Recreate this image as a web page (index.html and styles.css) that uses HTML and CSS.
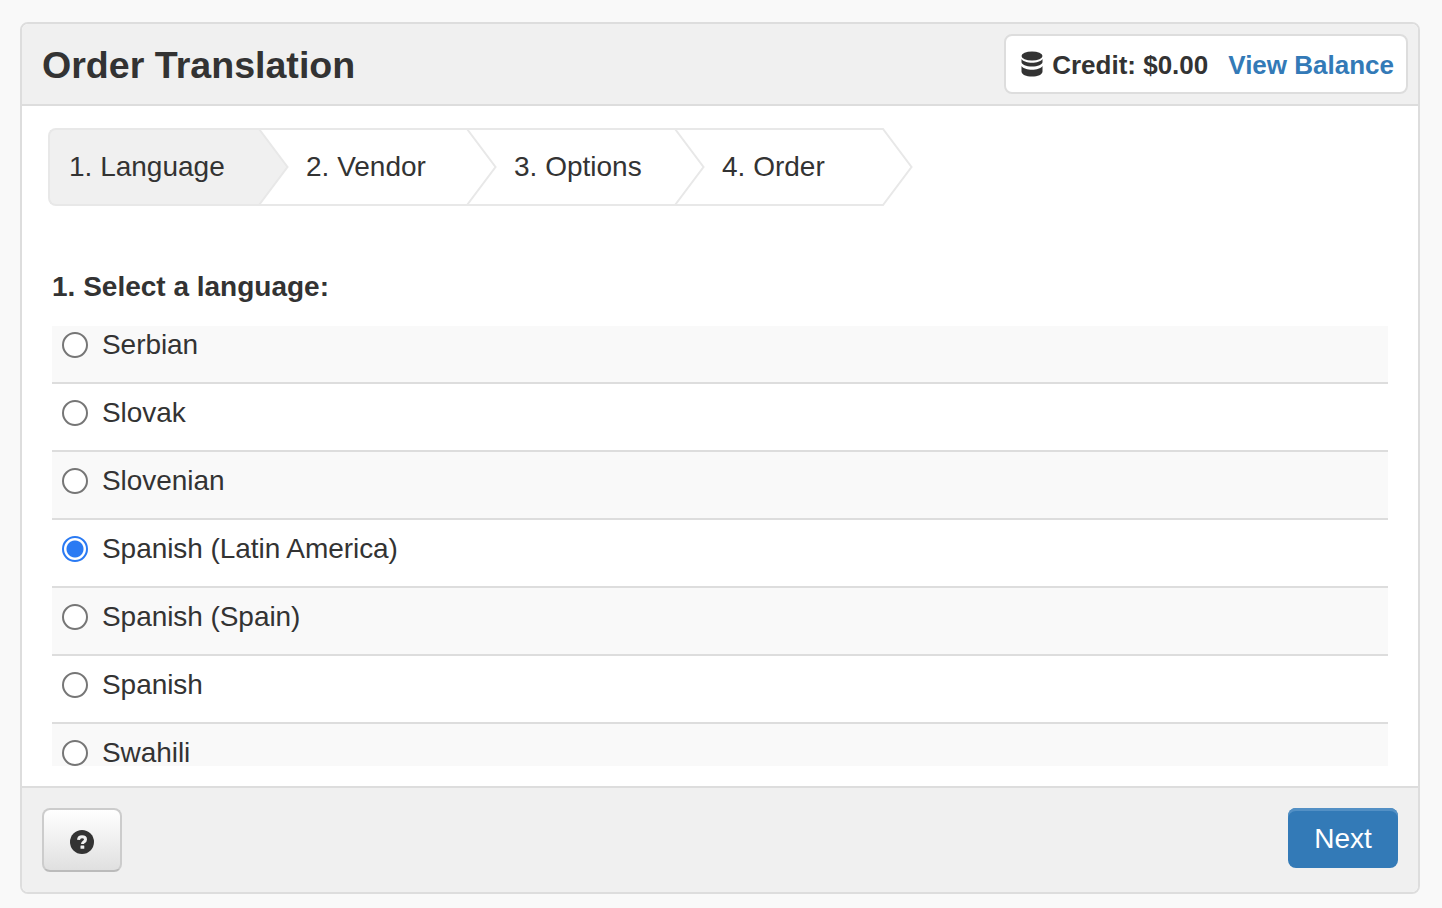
FILE: index.html
```html
<!DOCTYPE html>
<html lang="en">
<head>
<meta charset="utf-8">
<title>Order Translation</title>
<link rel="stylesheet" href="styles.css">
</head>
<body>
<main class="panel">
  <header class="panel-head">
    <h1 class="title">Order Translation</h1>
    <div class="credit">
      <svg class="db-icon" viewBox="0 0 22 26" aria-hidden="true">
        <ellipse cx="11" cy="5" rx="10.500" ry="4.500"/>
        <path d="M.5 8v3C.5 13.500 5.200 15.500 11 15.500s10.500-2 10.500-4.500V8c-1.800 2.500-6 3.700-10.500 3.700S2.300 10.500.5 8z"/>
        <path d="M.5 15v5.500C.5 23.500 5.200 25.500 11 25.500s10.500-2 10.500-5V15c-1.800 2.500-6 3.700-10.500 3.700S2.300 17.500.5 15z"/>
      </svg>
      <span class="credit-text">Credit: $0.00</span>
      <a class="balance" href="#">View Balance</a>
    </div>
  </header>

  <section class="panel-body">
    <ol class="steps">
      <li class="step step-active">1. Language
        <svg class="chev" viewBox="0 0 30 78" preserveAspectRatio="none" aria-hidden="true"><path d="M0 1H1L29.500 39L1 77H0"/></svg>
      </li>
      <li class="step">2. Vendor
        <svg class="chev" viewBox="0 0 30 78" preserveAspectRatio="none" aria-hidden="true"><path d="M0 1H1L29.500 39L1 77H0"/></svg>
      </li>
      <li class="step">3. Options
        <svg class="chev" viewBox="0 0 30 78" preserveAspectRatio="none" aria-hidden="true"><path d="M0 1H1L29.500 39L1 77H0"/></svg>
      </li>
      <li class="step">4. Order
        <svg class="chev" viewBox="0 0 30 78" preserveAspectRatio="none" aria-hidden="true"><path d="M0 1H1L29.500 39L1 77H0"/></svg>
      </li>
    </ol>

    <h2 class="prompt">1. Select a language:</h2>
    <div class="lang-window">
      <ul class="lang-list">
        <li class="lang"><label class="lang-label"><input class="radio" type="radio" name="lang">Serbian</label></li>
        <li class="lang"><label class="lang-label"><input class="radio" type="radio" name="lang">Slovak</label></li>
        <li class="lang"><label class="lang-label"><input class="radio" type="radio" name="lang">Slovenian</label></li>
        <li class="lang"><label class="lang-label"><input class="radio" type="radio" name="lang" checked>Spanish (Latin America)</label></li>
        <li class="lang"><label class="lang-label"><input class="radio" type="radio" name="lang">Spanish (Spain)</label></li>
        <li class="lang"><label class="lang-label"><input class="radio" type="radio" name="lang">Spanish</label></li>
        <li class="lang"><label class="lang-label"><input class="radio" type="radio" name="lang">Swahili</label></li>
      </ul>
    </div>
  </section>

  <footer class="panel-foot">
    <button class="btn-help" type="button" aria-label="Help">
      <svg class="help-icon" viewBox="0 0 24 24" aria-hidden="true">
        <circle cx="12" cy="12" r="12"/>
        <path class="help-mark" d="M8.500 9.800C8.700 7.800 10 6.800 12 6.800c2 0 3.500 1 3.500 2.700 0 1.300-.8 1.900-1.700 2.500-.9.600-1.300 1-1.300 1.900"/>
        <rect class="help-dot" x="10.500" y="15.500" width="3.800" height="3.200" rx=".5"/>
      </svg>
    </button>
    <button class="btn-next" type="button">Next</button>
  </footer>
</main>
</body>
</html>
```

FILE: styles.css
```css
* {
  box-sizing: border-box;
}

html,
body {
  height: 100%;
}

body {
  margin: 0;
  padding: 22px 22px 14px 20px;
  background: #f9f9f9;
  color: #333;
  font-family: "Liberation Sans", Arial, sans-serif;
}

.panel {
  display: flex;
  flex-direction: column;
  height: 872px;
  background: #fff;
  border: 2px solid #ddd;
  border-radius: 8px;
  overflow: hidden;
}

.panel-head {
  display: flex;
  align-items: center;
  justify-content: space-between;
  height: 82px;
  padding: 0 10px 0 20px;
  background: #f0f0f0;
  border-bottom: 2px solid #ddd;
}

.title {
  margin: 2px 0 0;
  font-size: 37.6px;
  font-weight: 700;
  line-height: 40px;
}

.credit {
  display: flex;
  align-items: center;
  height: 60px;
  padding: 2px 12px 0 15px;
  background: #fff;
  border: 2px solid #ddd;
  border-radius: 8px;
  font-size: 26px;
  font-weight: 700;
}

.db-icon {
  width: 22px;
  height: 26px;
  margin: -2px 9px 0 0;
  fill: #333;
}

.credit-text {
  margin-right: 20px;
}

.balance {
  color: #337ab7;
  text-decoration: none;
}

.panel-body {
  flex: 1;
  padding: 22px 30px 0 26px;
}

.steps {
  display: flex;
  margin: 0;
  padding: 0;
  list-style: none;
}

.step {
  position: relative;
  width: 208px;
  height: 78px;
  padding-left: 48px;
  border-top: 2px solid #e8e8e8;
  border-bottom: 2px solid #e8e8e8;
  font-size: 28px;
  line-height: 74px;
}

.step-active {
  width: 210px;
  padding-left: 19px;
  background: #f0f0f0;
  border-left: 2px solid #e8e8e8;
  border-radius: 8px 0 0 8px;
}

.chev {
  position: absolute;
  top: -2px;
  left: 100%;
  width: 30px;
  height: 78px;
  overflow: visible;
  fill: none;
  stroke: #e8e8e8;
  stroke-width: 2;
}

.step-active .chev {
  fill: #f0f0f0;
}

.prompt {
  margin: 64px 0 22px 4px;
  font-size: 28px;
  font-weight: 700;
  line-height: 34px;
}

.lang-window {
  height: 440px;
  margin-left: 4px;
  overflow: hidden;
}

.lang-list {
  margin: -10px 0 0;
  padding: 0;
  list-style: none;
}

.lang {
  height: 68px;
  border-bottom: 2px solid #ddd;
}

.lang:nth-child(odd) {
  background: #f9f9f9;
}

.lang-label {
  display: flex;
  align-items: center;
  gap: 14px;
  padding: 16px 10px 0;
  font-size: 28px;
  line-height: 26px;
  letter-spacing: -0.06px;
}

.radio {
  appearance: none;
  flex: none;
  width: 26px;
  height: 26px;
  margin: 0;
  background: #fff;
  border: 2px solid #767676;
  border-radius: 50%;
}

.radio:checked {
  background: radial-gradient(circle, #2a7af3 0 8px, #fff 9px);
  border-color: #2a7af3;
}

.panel-foot {
  display: flex;
  align-items: flex-start;
  justify-content: space-between;
  height: 106px;
  padding: 20px 20px 0;
  background: #f0f0f0;
  border-top: 2px solid #ddd;
}

.btn-help {
  display: flex;
  align-items: center;
  justify-content: center;
  width: 80px;
  height: 64px;
  padding: 3px 0 0;
  background: linear-gradient(#fff, #e0e0e0);
  border: 2px solid #ccc;
  border-bottom-color: #bbb;
  border-radius: 8px;
}

.help-icon {
  width: 24px;
  height: 24px;
  fill: #333;
}

.help-mark {
  fill: none;
  stroke: #f0f0f0;
  stroke-width: 3;
}

.help-dot {
  fill: #f0f0f0;
}

.btn-next {
  width: 110px;
  height: 60px;
  padding: 2px 0 0;
  background: #337ab7;
  border: 0;
  border-radius: 8px;
  box-shadow: inset 0 3px 0 #5390c5;
  color: #fff;
  font-family: inherit;
  font-size: 28px;
}
```
